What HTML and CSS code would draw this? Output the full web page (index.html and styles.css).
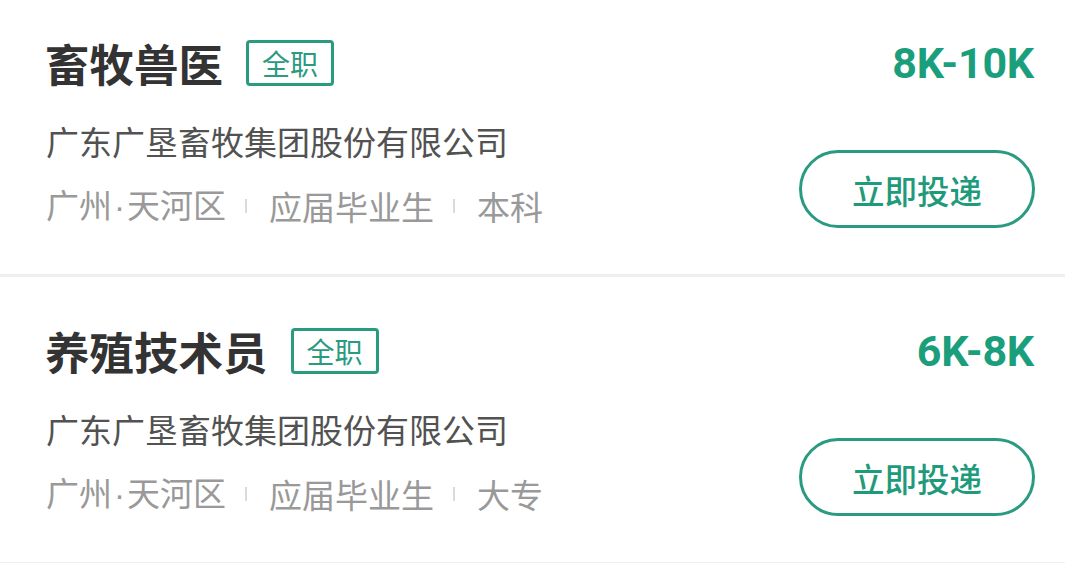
FILE: index.html
```html
<!DOCTYPE html>
<html lang="zh-CN">
<head>
<meta charset="utf-8">
<title>职位列表</title>
<link rel="stylesheet" href="styles.css">
</head>
<body>
<div class="list">
  <div class="card card-first">
    <div class="info">
      <div class="title-row">
        <span class="title">畜牧兽医</span>
        <span class="tag">全职</span>
      </div>
      <div class="company">广东广垦畜牧集团股份有限公司</div>
      <div class="meta">
        <span>广州<span class="dot">·</span>天河区</span><i class="sep"></i><span>应届毕业生</span><i class="sep"></i><span>本科</span>
      </div>
    </div>
    <div class="side">
      <div class="salary">8K-10K</div>
      <div class="btn">立即投递</div>
    </div>
  </div>
  <div class="card">
    <div class="info">
      <div class="title-row">
        <span class="title">养殖技术员</span>
        <span class="tag">全职</span>
      </div>
      <div class="company">广东广垦畜牧集团股份有限公司</div>
      <div class="meta">
        <span>广州<span class="dot">·</span>天河区</span><i class="sep"></i><span>应届毕业生</span><i class="sep"></i><span>大专</span>
      </div>
    </div>
    <div class="side">
      <div class="salary">6K-8K</div>
      <div class="btn">立即投递</div>
    </div>
  </div>
</div>
</body>
</html>
```
FILE: styles.css
```css
* { box-sizing: border-box; }
html, body { margin: 0; padding: 0; background: #ffffff; }
body {
  font-family: "Noto Sans CJK SC", "Noto Sans", sans-serif;
  width: 1065px;
  height: 563px;
  overflow: hidden;
}
.list { display: flex; flex-direction: column; }
.card {
  display: grid;
  grid-template-columns: 1fr auto;
  padding: 51px 30px 44px 47px;
  border-bottom: 3px solid #efefef;
  height: 288px;
}
.card-first { padding-top: 40px; height: 277px; }
.info { display: flex; flex-direction: column; }
.title-row { display: flex; align-items: center; height: 46px; }
.title {
  font-size: 44.5px;
  font-weight: 700;
  color: #333333;
  line-height: 46px;
  margin-left: -2px;
}
.tag {
  margin-left: 23px;
  height: 46px;
  border: 3px solid #2a9a80;
  border-radius: 4px;
  padding: 0 13px;
  font-size: 28px;
  line-height: 40px;
  color: #2a9a80;
}
.company {
  margin-top: 33px;
  font-size: 33px;
  line-height: 44px;
  color: #525252;
  margin-left: -1px;
}
.meta {
  margin-top: 19px;
  display: flex;
  align-items: center;
  font-size: 33px;
  line-height: 44px;
  color: #999999;
  margin-left: -1px;
}
.dot {
  font-family: "Liberation Sans", sans-serif;
  padding: 0 2px;
}
.sep {
  display: block;
  width: 2px;
  height: 14px;
  background: #dadada;
  margin: 0 22px 0 19px;
}
.side { display: flex; flex-direction: column; align-items: flex-end; }
.salary {
  font-family: Roboto, "Noto Sans", sans-serif;
  font-weight: 700;
  font-size: 43px;
  line-height: 46px;
  color: #1a9e7c;
  letter-spacing: -0.2px;
  margin-right: 1px;
}
.btn {
  margin-top: 64px;
  width: 236px;
  height: 78px;
  border: 3px solid #2a9a80;
  border-radius: 39px;
  display: flex;
  align-items: center;
  justify-content: center;
  font-size: 32.5px;
  font-weight: 500;
  color: #1f9a7b;
}
```
